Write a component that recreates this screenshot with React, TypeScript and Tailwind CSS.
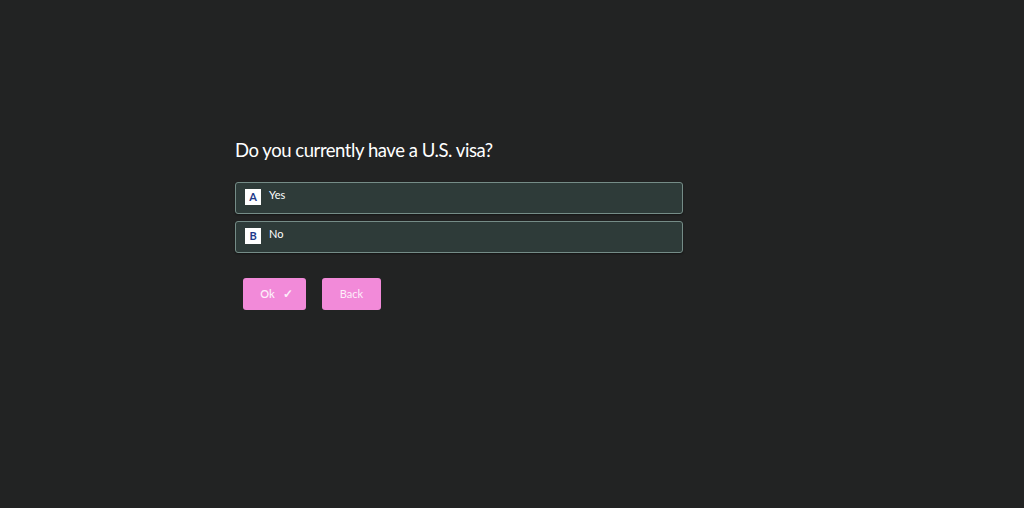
import React, { useState } from 'react';

const options = [
    { key: 'A', label: 'Yes' },
    { key: 'B', label: 'No' },
];

export default function App() {
    const [selected, setSelected] = useState<string | null>(null);

    return (
        <div className="min-h-screen w-full bg-[#222323] font-['Lato','Noto_Sans',sans-serif]">
            <div className="pl-[235px] pt-[138px] w-[683px]">
                <h1 className="text-[18.5px] leading-[25px] tracking-[-0.45px] text-white">Do you currently have a U.S. visa?</h1>

                <div className="mt-[19px] flex flex-col gap-[7px]">
                    {options.map((o) => (
                        <button
                            key={o.key}
                            onClick={() => setSelected(o.key)}
                            className={`h-8 w-full flex items-start gap-2 rounded-[3px] border border-[#758c87] bg-[#2e3b39] px-[9px] pt-[5px] text-left shadow-[0_1px_2px_rgba(0,0,0,0.4)] ${selected === o.key ? 'bg-[#3a4a47]' : ''}`}
                        >
                            <span className="mt-px h-4 w-4 flex items-center justify-center bg-white text-[11px] font-bold text-[#1e3a8a]">
                                {o.key}
                            </span>
                            <span className="text-[11px] leading-[14px] text-white">{o.label}</span>
                        </button>
                    ))}
                </div>

                <div className="mt-[25px] ml-2 flex gap-4">
                    <button className="h-8 w-[63px] flex items-center justify-center gap-2 rounded-[3px] bg-[#f28ad9] pl-1 text-[11px] font-semibold text-[#fdeefa]">
                        Ok <span className="text-[12px]">✓</span>
                    </button>
                    <button className="h-8 w-[59px] flex items-center justify-center rounded-[3px] bg-[#f28ad9] text-[11px] text-[#fdeefa]">
                        Back
                    </button>
                </div>
            </div>
        </div>
    );
}
